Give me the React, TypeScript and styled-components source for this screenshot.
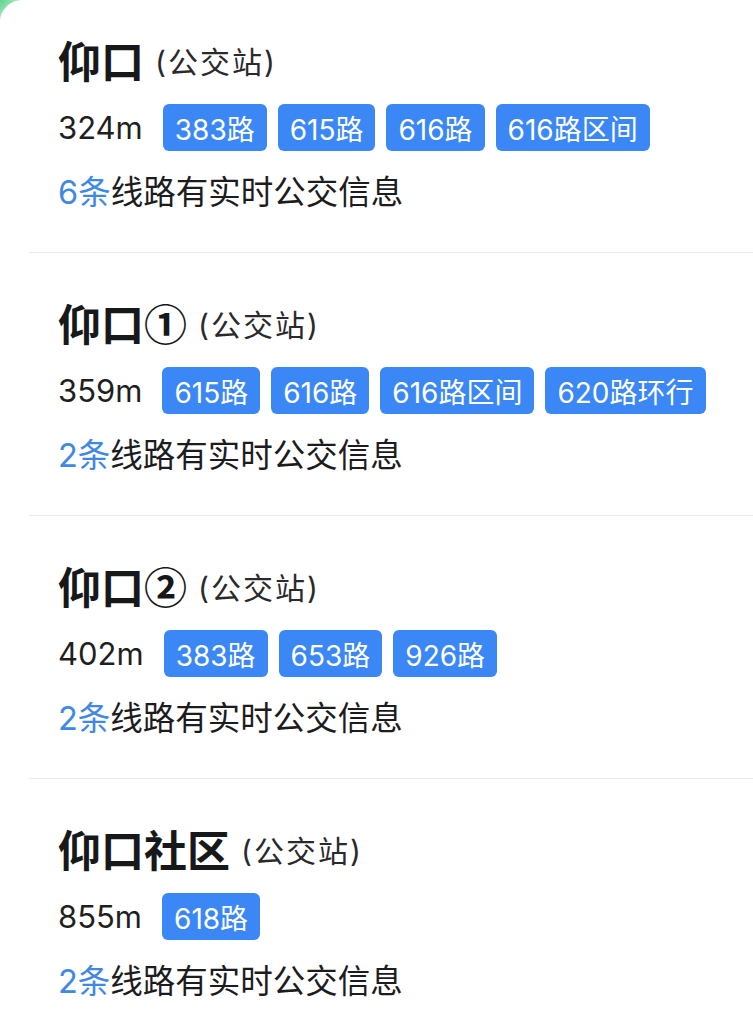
import React from 'react';
import styled, {createGlobalStyle} from 'styled-components';

const GlobalStyle = createGlobalStyle`
  html, body {
    margin: 0;
    padding: 0;
    background: #ffffff;
  }
  body {
    font-family: Inter, "Noto Sans CJK SC", sans-serif;
    color: #1c1c1e;
  }
`;

const Page = styled.div`
  width: 753px;
  min-height: 1012px;
  background: radial-gradient(circle at 0 0, #5ed48e 0, #a9e8c0 18px, #ffffff 44px);
  overflow: hidden;
`;

const Card = styled.div`
  background: #ffffff;
  border-top-left-radius: 22px;
  min-height: 1012px;
`;

const Section = styled.div<{ $first?: boolean }>`
  margin-left: 29px;
  padding: ${p => (p.$first ? '31px' : '41px')} 0 39px 29px;
  border-bottom: 1px solid #ebebeb;

  &:last-child {
    border-bottom: none;
  }
`;

const TitleRow = styled.div`
  display: flex;
  align-items: center;
  height: 56px;
  gap: 11px;
`;

const StopName = styled.span`
  font-family: "Noto Sans CJK SC", sans-serif;
  font-size: 43px;
  font-weight: 700;
  color: #17181a;
`;

const StopKind = styled.span`
  font-size: 30px;
  color: #2a2a2c;
  letter-spacing: 2px;
  padding-top: 2px;
`;

const LineRow = styled.div`
  display: flex;
  align-items: center;
  margin-top: 17px;
  height: 47px;
`;

const Distance = styled.span`
  font-size: 31px;
  color: #1f1f21;
  margin-right: 20px;
`;

const Tags = styled.div`
  display: flex;
  gap: 11px;
`;

const Tag = styled.span`
  display: inline-flex;
  align-items: center;
  height: 47px;
  padding: 0 12px;
  border-radius: 6px;
  background: #3a87f5;
  color: #ffffff;
  font-size: 28px;
`;

const Info = styled.div`
  margin-top: 22px;
  height: 40px;
  line-height: 40px;
  font-size: 32.5px;
  color: #1c1c1e;
`;

const Count = styled.span`
  color: #3f88e3;
`;

const stops = [
  {name: '仰口', dist: '324m', lines: ['383路', '615路', '616路', '616路区间'], count: 6},
  {name: '仰口①', dist: '359m', lines: ['615路', '616路', '616路区间', '620路环行'], count: 2},
  {name: '仰口②', dist: '402m', lines: ['383路', '653路', '926路'], count: 2},
  {name: '仰口社区', dist: '855m', lines: ['618路'], count: 2},
];

export default function App() {
  return (
    <Page>
      <GlobalStyle />
      <Card>
        {stops.map((s, i) => (
          <Section key={s.name} $first={i === 0}>
            <TitleRow>
              <StopName>{s.name}</StopName>
              <StopKind>(公交站)</StopKind>
            </TitleRow>
            <LineRow>
              <Distance>{s.dist}</Distance>
              <Tags>
                {s.lines.map(l => <Tag key={l}>{l}</Tag>)}
              </Tags>
            </LineRow>
            <Info>
              <Count>{s.count}条</Count>线路有实时公交信息
            </Info>
          </Section>
        ))}
      </Card>
    </Page>
  );
}
